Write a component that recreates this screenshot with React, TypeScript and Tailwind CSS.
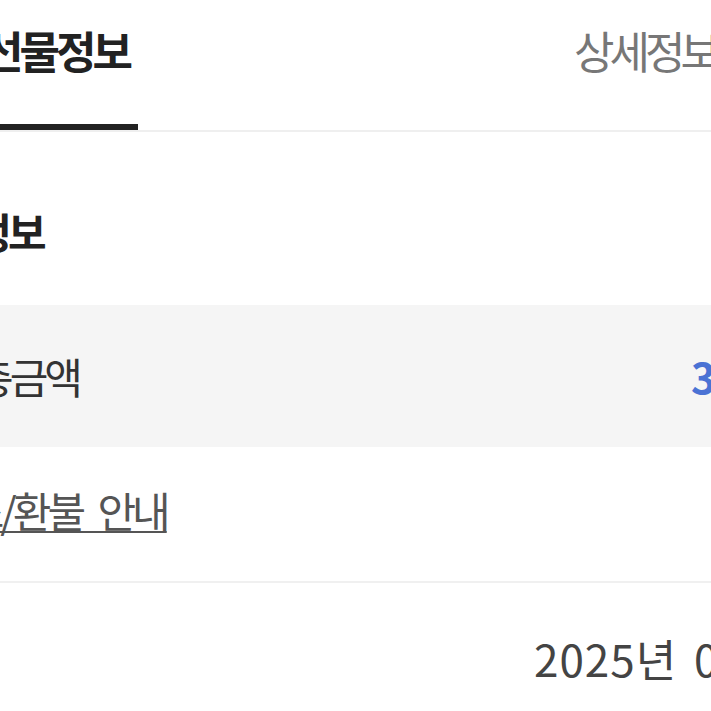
export default function App() {
  return (
    <div className="w-[711px] h-[711px] overflow-hidden bg-white font-['Noto_Sans_CJK_KR','Noto_Sans',sans-serif]">
      {/* tabs */}
      <div className="relative flex h-[132px] border-b-2 border-[#efefef]">
        <div className="relative w-[138px] h-full shrink-0">
          <div className="ml-[-17px] pt-[28px] whitespace-nowrap text-[44px] leading-none font-bold tracking-[-4px] text-[#222]">
            선물정보
          </div>
          <div className="absolute left-0 right-0 bottom-0 h-[6px] bg-[#222]" />
        </div>
        <div className="ml-[436px] pt-[28px] whitespace-nowrap text-[44px] leading-none tracking-[-5px] text-[#777]">
          상세정보
        </div>
      </div>

      {/* heading */}
      <div className="h-[173px] pt-[24px] flex items-center">
        <h2 className="ml-[-96px] whitespace-nowrap text-[42px] leading-none font-bold tracking-[-4px] text-[#222]">
          결제정보
        </h2>
      </div>

      {/* total row */}
      <div className="h-[142px] bg-[#f5f5f5] flex items-center">
        <span className="ml-[-25px] w-[716px] shrink-0 whitespace-nowrap text-[42px] leading-none tracking-[-4px] text-[#333]">
          총금액
        </span>
        <span className="whitespace-nowrap text-[42px] leading-none font-bold tracking-[-2px] text-[#4a72d4]">
          30,000원
        </span>
      </div>

      {/* refund link */}
      <div className="h-[136px] pb-[8px] flex items-center border-b-2 border-[#f0f0f0]">
        <a className="ml-[-69px] whitespace-nowrap text-[42px] leading-none tracking-[-4px] [word-spacing:10px] text-[#555] underline underline-offset-[3px] decoration-2">
          취소/환불 안내
        </a>
      </div>

      {/* date */}
      <div className="h-[150px] flex items-center">
        <span className="ml-[534px] whitespace-nowrap text-[44px] leading-none tracking-[1px] [word-spacing:6px] text-[#444]">
          2025년 03월 12일
        </span>
      </div>
    </div>
  )
}
